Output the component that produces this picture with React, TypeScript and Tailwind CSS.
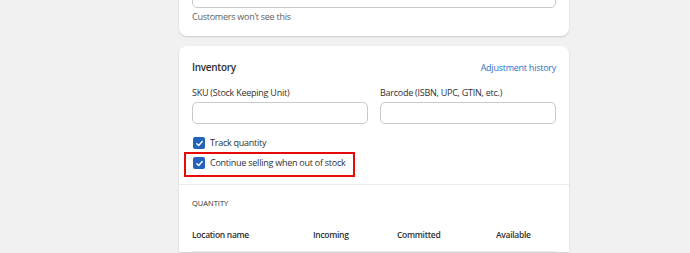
import React from "react";

function Check({ label }: { label: string }) {
  return (
    <div className="flex items-center gap-[5px] h-[20px]">
      <span className="w-[12px] h-[12px] rounded-[2px] bg-[#2463bc] flex items-center justify-center">
        <svg width="9" height="9" viewBox="0 0 10 10">
          <path d="M2 5.2 L4.1 7.2 L8 2.8" stroke="white" strokeWidth="1.6" fill="none" strokeLinecap="round" strokeLinejoin="round" />
        </svg>
      </span>
      <span className="text-[9px] leading-[14px] tracking-[-0.25px] text-[#303030]">{label}</span>
    </div>
  );
}

export default function App() {
  return (
    <div
      className="w-[690px] h-[253px] bg-[#f1f1f1] overflow-hidden pl-[179px]"
      style={{ fontFamily: '"Open Sans", "Noto Sans", sans-serif' }}
    >
      <div className="w-[390px]">
        <div className="mt-[-40px] bg-white rounded-[8px] shadow-[0_1px_2px_rgba(0,0,0,0.16)] px-[13px] pt-[18px] pb-[12px]">
          <div className="h-[30px] border border-[#c9c9c9] rounded-[5px]" />
          <div className="text-[9px] tracking-[-0.25px] text-[#616161] mt-[2px] leading-[14px]">Customers won’t see this</div>
        </div>
        <div className="mt-[10px] bg-white rounded-t-[8px] shadow-[0_1px_2px_rgba(0,0,0,0.16)]">
          <div className="px-[13px] pt-[12px] pb-[11px]">
            <div className="flex justify-between items-center h-[19px]">
              <span className="text-[10px] tracking-[-0.3px] font-semibold text-[#303030]">Inventory</span>
              <span className="text-[9px] tracking-[-0.25px] text-[#2c6ecb]">Adjustment history</span>
            </div>
            <div className="grid grid-cols-2 gap-[12px] mt-[9px]">
              <div>
                <div className="text-[9px] tracking-[-0.25px] text-[#303030] leading-[14px]">SKU (Stock Keeping Unit)</div>
                <div className="h-[22px] mt-[2px] border border-[#c9c9c9] rounded-[5px]" />
              </div>
              <div>
                <div className="text-[9px] tracking-[-0.25px] text-[#303030] leading-[14px]">Barcode (ISBN, UPC, GTIN, etc.)</div>
                <div className="h-[22px] mt-[2px] border border-[#c9c9c9] rounded-[5px]" />
              </div>
            </div>
            <div className="mt-[9px] pl-[1px]">
              <Check label="Track quantity" />
            </div>
            <div className="relative pl-[1px]">
              <Check label="Continue selling when out of stock" />
              <div className="absolute left-[-8px] top-[-1px] w-[171px] h-[25px] border-2 border-[#e8090b]" />
            </div>
          </div>
          <div className="border-t border-[#ebebeb] px-[13px] pt-[12px]">
            <div className="text-[7.5px] font-medium text-[#303030] leading-[12px]">QUANTITY</div>
            <div className="flex text-[8.5px] tracking-[-0.3px] font-semibold text-[#303030] leading-[14px] mt-[19px] pb-[9px] border-b border-[#ebebeb]">
              <span className="w-[121px]">Location name</span>
              <span className="w-[84px]">Incoming</span>
              <span className="w-[99px]">Committed</span>
              <span>Available</span>
            </div>
          </div>
        </div>
      </div>
    </div>
  );
}
